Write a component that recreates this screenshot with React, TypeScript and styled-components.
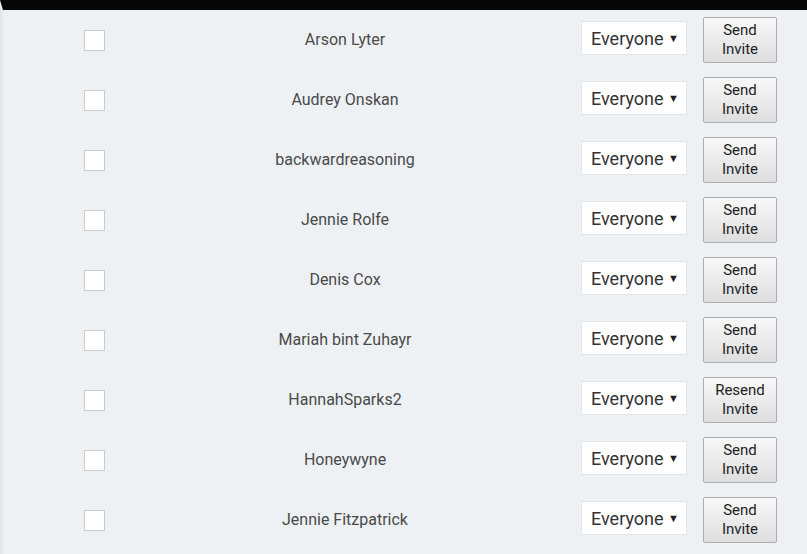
import React from 'react';
import styled, { createGlobalStyle } from 'styled-components';

const GlobalStyle = createGlobalStyle`
  html, body {
    margin: 0;
    padding: 0;
    background: #edf1f4;
  }
  body {
    font-family: Roboto, "Liberation Sans", sans-serif;
  }
`;

const Page = styled.div`
  width: 807px;
  height: 554px;
  overflow: hidden;
  background: #edf1f4;
  border-top: 10px solid #060606;
  border-left: 3px solid #e4e8eb;
  box-sizing: border-box;
`;

const Row = styled.div`
  display: grid;
  grid-template-columns: 182px 320px 76px 106px 16px 74px;
  align-items: center;
  height: 60px;
`;

const CheckCell = styled.div`
  display: flex;
  justify-content: center;
`;

const Checkbox = styled.span`
  display: block;
  width: 19px;
  height: 19px;
  background: #fff;
  border: 1px solid #c9cdd0;
`;

const Name = styled.div`
  text-align: center;
  font-size: 16px;
  color: #4a4a4a;
  margin-bottom: 2px;
`;

const Select = styled.div`
  grid-column: 4;
  display: flex;
  align-items: center;
  justify-content: space-between;
  box-sizing: border-box;
  height: 34px;
  margin-bottom: 4px;
  padding: 0 7px 0 9px;
  background: #fff;
  border: 1px solid #e2e6e9;
  font-size: 18px;
  color: #333;
`;

const Caret = styled.span`
  font-size: 11px;
  color: #222;
`;

const Button = styled.button`
  grid-column: 6;
  box-sizing: border-box;
  width: 74px;
  height: 46px;
  margin-bottom: 1px;
  padding: 0;
  border: 1px solid #adadad;
  border-radius: 2px;
  background: linear-gradient(#f8f8f8, #dedede);
  font-family: Roboto, "Liberation Sans", sans-serif;
  font-size: 15px;
  line-height: 19px;
  color: #222;
`;

const users = [
  { name: 'Arson Lyter', invited: false },
  { name: 'Audrey Onskan', invited: false },
  { name: 'backwardreasoning', invited: false },
  { name: 'Jennie Rolfe', invited: false },
  { name: 'Denis Cox', invited: false },
  { name: 'Mariah bint Zuhayr', invited: false },
  { name: 'HannahSparks2', invited: true },
  { name: 'Honeywyne', invited: false },
  { name: 'Jennie Fitzpatrick', invited: false },
];

const App = (): React.ReactElement => (
  <>
    <GlobalStyle />
    <Page>
      {users.map((u) => (
        <Row key={u.name}>
          <CheckCell>
            <Checkbox />
          </CheckCell>
          <Name>{u.name}</Name>
          <Select>
            Everyone <Caret>▼</Caret>
          </Select>
          <Button>
            {u.invited ? 'Resend' : 'Send'}
            <br />
            Invite
          </Button>
        </Row>
      ))}
    </Page>
  </>
);

export default App;
